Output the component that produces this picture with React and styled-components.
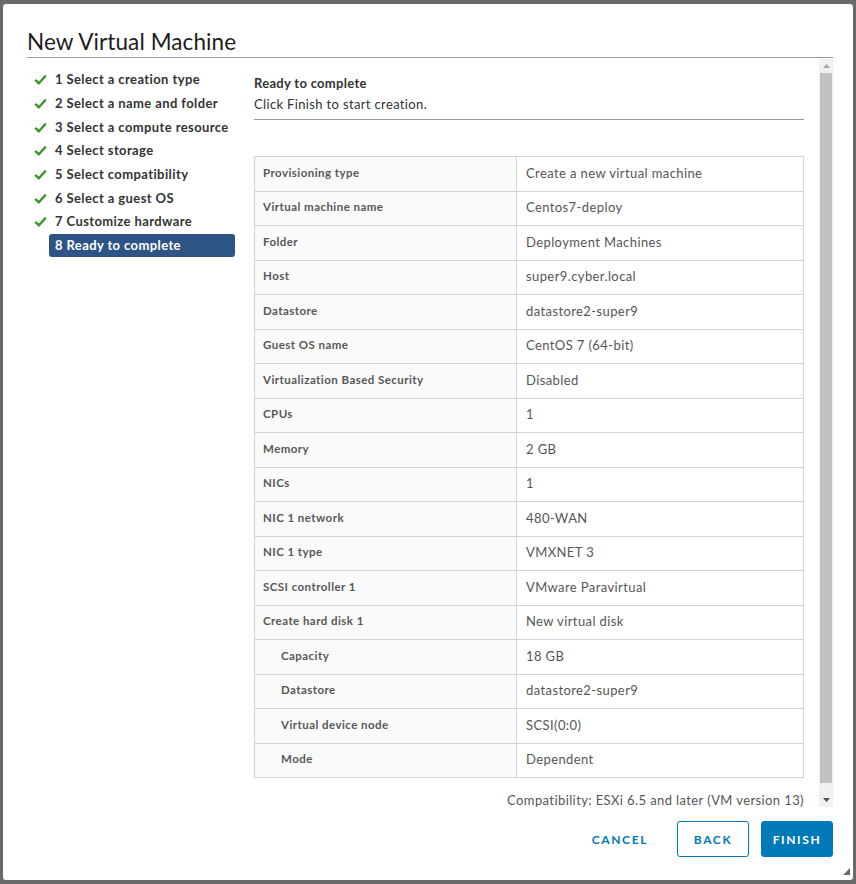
import React from 'react';
import styled, { createGlobalStyle } from 'styled-components';

const GlobalStyle = createGlobalStyle`
  html, body {
    margin: 0;
    padding: 0;
    background: #6a6a6a;
  }
  body {
    font-family: Lato, "Liberation Sans", sans-serif;
    color: #565656;
  }
`;

const steps = [
  '1 Select a creation type',
  '2 Select a name and folder',
  '3 Select a compute resource',
  '4 Select storage',
  '5 Select compatibility',
  '6 Select a guest OS',
  '7 Customize hardware',
  '8 Ready to complete'
];

const rows = [
  ['Provisioning type', 'Create a new virtual machine'],
  ['Virtual machine name', 'Centos7-deploy'],
  ['Folder', 'Deployment Machines'],
  ['Host', 'super9.cyber.local'],
  ['Datastore', 'datastore2-super9'],
  ['Guest OS name', 'CentOS 7 (64-bit)'],
  ['Virtualization Based Security', 'Disabled'],
  ['CPUs', '1'],
  ['Memory', '2 GB'],
  ['NICs', '1'],
  ['NIC 1 network', '480-WAN'],
  ['NIC 1 type', 'VMXNET 3'],
  ['SCSI controller 1', 'VMware Paravirtual'],
  ['Create hard disk 1', 'New virtual disk'],
  ['Capacity', '18 GB', true],
  ['Datastore', 'datastore2-super9', true],
  ['Virtual device node', 'SCSI(0:0)', true],
  ['Mode', 'Dependent', true]
];

const Backdrop = styled.div`
  padding: 4px 3px 4px 3px;
`;

const Modal = styled.div`
  position: relative;
  box-sizing: border-box;
  width: 850px;
  height: 876px;
  background: #fff;
  border-radius: 3px;
  padding: 0 20px 0 24px;
  display: flex;
  flex-direction: column;
`;

const Header = styled.div`
  padding-top: 25px;
  border-bottom: 1px solid #9a9a9a;
`;

const Title = styled.h1`
  margin: 0 0 2px 0;
  font-size: 22.5px;
  line-height: 26px;
  font-weight: 400;
  color: #1c1c1c;
  letter-spacing: 0.1px;
`;

const Body = styled.div`
  display: flex;
  height: 750px;
`;

const Nav = styled.ul`
  list-style: none;
  margin: 0;
  padding: 10px 0 0 0;
  width: 227px;
  flex: none;
`;

const Step = styled.li`
  display: flex;
  align-items: center;
  height: 23.65px;
`;

const CheckSlot = styled.span`
  width: 22px;
  flex: none;
  display: flex;
  align-items: center;
  padding-left: 7px;
  box-sizing: border-box;
`;

const StepLabel = styled.span`
  box-sizing: border-box;
  width: 186px;
  height: 23px;
  line-height: 23px;
  padding: 0 6px;
  border-radius: 3px;
  font-size: 13px;
  font-weight: 700;
  letter-spacing: 0.4px;
  color: ${({ active }) => (active ? '#fff' : '#333')};
  background: ${({ active }) => (active ? '#2d5485' : 'transparent')};
  white-space: nowrap;
`;

const Content = styled.div`
  flex: 1;
  padding: 17px 15px 0 0;
  display: flex;
  flex-direction: column;
`;

const Heading = styled.div`
  font-size: 13px;
  font-weight: 700;
  color: #333;
  line-height: 16px;
  letter-spacing: 0.3px;
`;

const Sub = styled.div`
  font-size: 13px;
  color: #333;
  line-height: 16px;
  letter-spacing: 0.35px;
  margin-top: 5px;
  padding-bottom: 7px;
  border-bottom: 1px solid #9a9a9a;
`;

const Table = styled.table`
  margin-top: 36px;
  width: 100%;
  border-collapse: collapse;
  border: 1px solid #d4d4d4;
`;

const Row = styled.tr`
  height: 34.5px;
`;

const LabelCell = styled.td`
  box-sizing: border-box;
  width: 262px;
  background: #fafafa;
  border: 1px solid #d4d4d4;
  padding: 0 0 3px ${({ indent }) => (indent ? '26px' : '8px')};
  font-size: 11.5px;
  font-weight: 700;
  letter-spacing: 0.45px;
  color: #575757;
  vertical-align: middle;
`;

const ValueCell = styled.td`
  border: 1px solid #d4d4d4;
  padding: 0 0 2px 9px;
  font-size: 13px;
  letter-spacing: 0.4px;
  color: #565656;
  vertical-align: middle;
`;

const Compat = styled.div`
  margin-top: 14px;
  text-align: right;
  font-size: 13px;
  letter-spacing: 0.4px;
  color: #565656;
`;

const Scrollbar = styled.div`
  width: 14px;
  flex: none;
  margin-top: 1px;
  height: 748px;
  background: #f1f1f1;
  display: flex;
  flex-direction: column;
  align-items: center;
`;

const Arrow = styled.div`
  height: 14px;
  display: flex;
  align-items: center;
  justify-content: center;
  margin-top: ${({ bottom }) => (bottom ? 'auto' : '0')};
`;

const Thumb = styled.div`
  width: 12px;
  height: 710px;
  background: #c1c1c1;
`;

const Footer = styled.div`
  display: flex;
  justify-content: flex-end;
  align-items: center;
  gap: 12px;
  margin-top: 13px;
`;

const Button = styled.button`
  box-sizing: border-box;
  height: 36px;
  min-width: ${({ flat }) => (flat ? '0' : '72px')};
  padding: 0 10px;
  margin-right: ${({ flat }) => (flat ? '6px' : '0')};
  border-radius: 3px;
  font-family: Lato, "Liberation Sans", sans-serif;
  font-size: 12px;
  font-weight: 700;
  letter-spacing: 1.6px;
  text-transform: uppercase;
  cursor: pointer;
  color: ${({ primary }) => (primary ? '#fff' : '#0079b8')};
  background: ${({ primary }) => (primary ? '#0079b8' : '#fff')};
  border: 1px solid ${({ flat }) => (flat ? 'transparent' : '#0079b8')};
`;

const Grip = styled.svg`
  position: absolute;
  right: 3px;
  bottom: 5px;
`;

const Check = () => (
  <svg width="13" height="11" viewBox="0 0 13 11">
    <path d="M1.2 5.8 L4.8 9.2 L11.8 1.6" fill="none" stroke="#3c9a2c" strokeWidth="2.4" />
  </svg>
);

const App = () => (
  <Backdrop>
    <GlobalStyle />
    <Modal>
      <Header>
        <Title>New Virtual Machine</Title>
      </Header>
      <Body>
        <Nav>
          {steps.map((s, i) => (
            <Step key={s}>
              <CheckSlot>{i < steps.length - 1 && <Check />}</CheckSlot>
              <StepLabel active={i === steps.length - 1}>{s}</StepLabel>
            </Step>
          ))}
        </Nav>
        <Content>
          <Heading>Ready to complete</Heading>
          <Sub>Click Finish to start creation.</Sub>
          <Table>
            <tbody>
              {rows.map(([label, value, indent], i) => (
                <Row key={i}>
                  <LabelCell indent={indent}>{label}</LabelCell>
                  <ValueCell>{value}</ValueCell>
                </Row>
              ))}
            </tbody>
          </Table>
          <Compat>Compatibility: ESXi 6.5 and later (VM version 13)</Compat>
        </Content>
        <Scrollbar>
          <Arrow>
            <svg width="7" height="4" viewBox="0 0 7 4">
              <path d="M0 4 L3.5 0 L7 4 Z" fill="#a3a3a3" />
            </svg>
          </Arrow>
          <Thumb />
          <Arrow bottom>
            <svg width="7" height="4" viewBox="0 0 7 4">
              <path d="M0 0 L3.5 4 L7 0 Z" fill="#505050" />
            </svg>
          </Arrow>
        </Scrollbar>
      </Body>
      <Footer>
        <Button flat>Cancel</Button>
        <Button>Back</Button>
        <Button primary>Finish</Button>
      </Footer>
      <Grip width="7" height="7" viewBox="0 0 7 7">
        <path d="M7 0 L7 7 L0 7 Z" fill="#6a6a6a" />
      </Grip>
    </Modal>
  </Backdrop>
);

export default App;
